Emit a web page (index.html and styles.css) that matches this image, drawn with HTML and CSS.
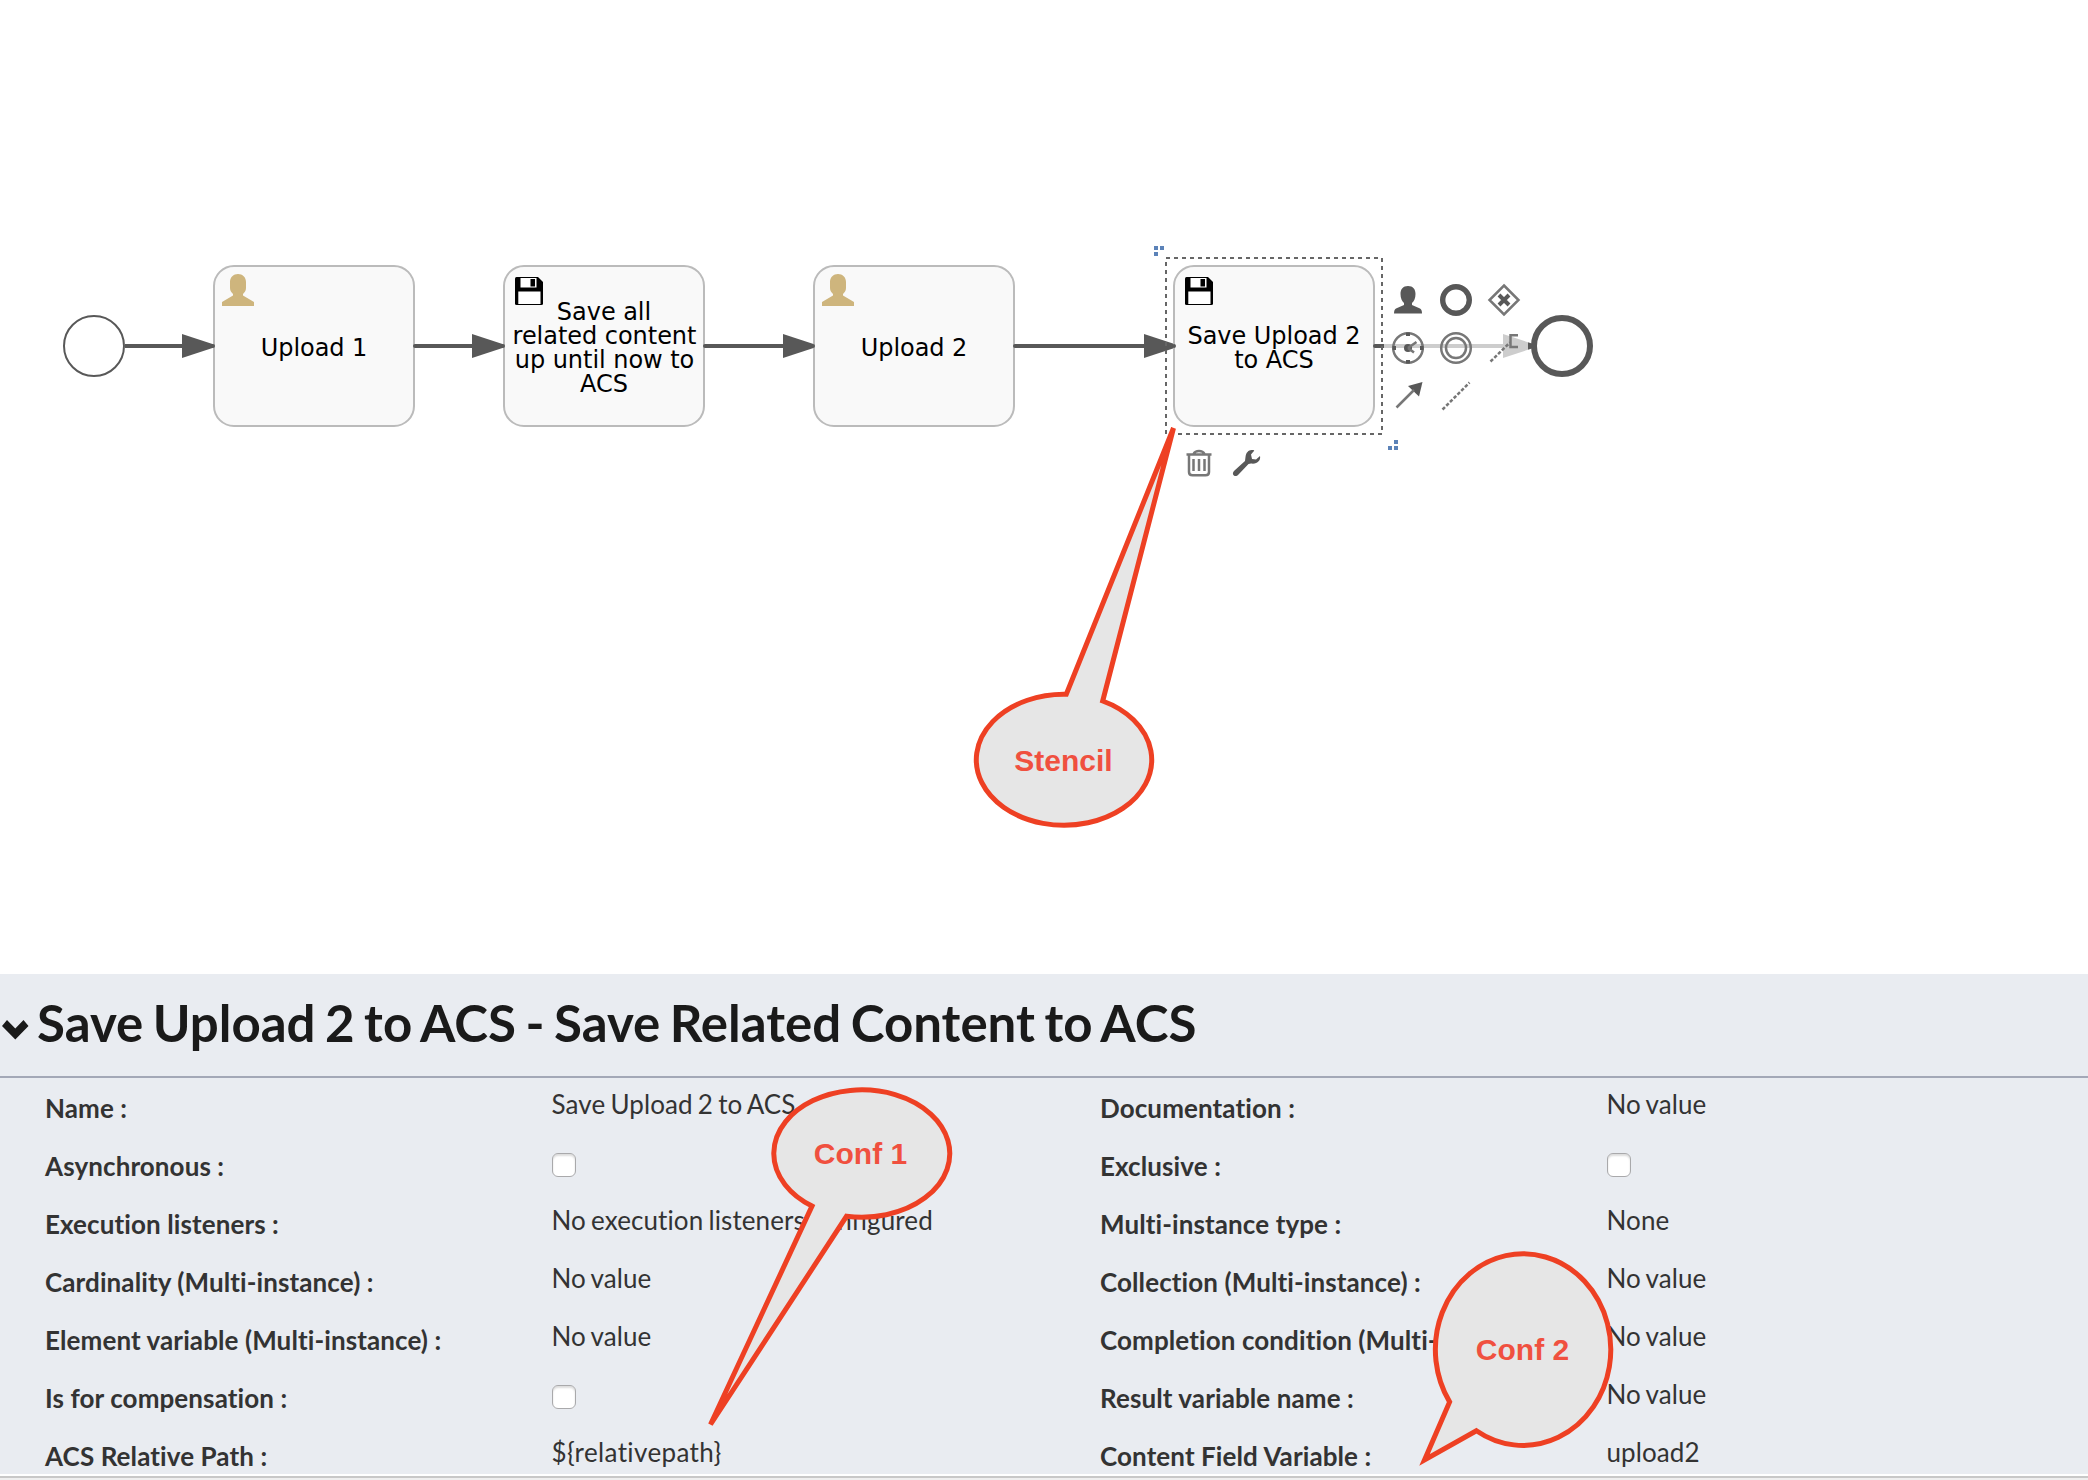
FILE: index.html
```html
<!DOCTYPE html>
<html lang="en">
<head>
<meta charset="utf-8">
<title>Process editor</title>
<link rel="stylesheet" href="styles.css">
</head>
<body>
<main class="editor">
  <section class="canvas">
    <svg class="diagram" viewBox="0 0 2088 974" width="2088" height="974">
      <defs>
        <symbol id="user" viewBox="0 0 32 32"><path d="M16 0C20.5 0 24 3 24 8V14C24 17 22.500 18.500 21 20V21.500L32 28V32H0V28L11 21.500V20C9.500 18.500 8 17 8 14V8C8 3 11.500 0 16 0Z"/></symbol>
        <symbol id="disk" viewBox="0 0 28 28">
          <path d="M1.500 0H23L28 5V26.500Q28 28 26.500 28H1.500Q0 28 0 26.500V1.500Q0 0 1.500 0Z"/>
          <path fill="#fff" d="M5.500 1H15.500V10.500H5.500ZM3.300 14.500H25.500V27H3.300ZM20 1H21.500V10.500H15.500V9.500H20ZM15.500 1H20V2H15.500Z"/>
        </symbol>
        <symbol id="head" viewBox="0 0 32 24"><path d="M0 0L32 10.500V13.500L0 24Z"/></symbol>
      </defs>
      <g class="flow">
        <path d="M125 346H190M415 346H480M705 346H790M1015 346H1150M1375 346H1510"/>
      </g>
      <g class="ink">
        <use href="#head" x="182" y="334" width="32" height="24"/>
        <use href="#head" x="472" y="334" width="32" height="24"/>
        <use href="#head" x="783" y="334" width="32" height="24"/>
        <use href="#head" x="1144" y="334" width="32" height="24"/>
        <use href="#head" x="1503" y="334" width="32" height="24"/>
      </g>
      <circle class="start" cx="94" cy="346" r="30"/>
      <circle class="end" cx="1562" cy="346" r="28"/>
      <rect class="task" x="214" y="266" width="200" height="160" rx="20"/>
      <rect class="task" x="504" y="266" width="200" height="160" rx="20"/>
      <rect class="task" x="814" y="266" width="200" height="160" rx="20"/>
      <rect class="task" x="1174" y="266" width="200" height="160" rx="20"/>
      <g class="ink"><circle cx="213" cy="346" r="2"/><circle cx="415" cy="346" r="2"/><circle cx="503" cy="346" r="2"/><circle cx="705" cy="346" r="2"/><circle cx="813" cy="346" r="2"/><circle cx="1015" cy="346" r="2"/><circle cx="1174" cy="346" r="2"/><circle cx="1375" cy="346" r="2"/></g>
      <g class="tan">
        <use href="#user" x="222" y="274" width="32" height="32"/>
        <use href="#user" x="822" y="274" width="32" height="32"/>
      </g>
      <use href="#disk" x="515" y="277" width="28" height="28"/>
      <use href="#disk" x="1185" y="277" width="28" height="28"/>
      <g class="task-text">
        <text x="314" y="356">Upload 1</text>
        <text x="604" y="320">Save all</text>
        <text x="604.500" y="344">related content</text>
        <text x="604.500" y="368">up until now to</text>
        <text x="604" y="392">ACS</text>
        <text x="914" y="356">Upload 2</text>
        <text x="1274" y="344">Save Upload 2</text>
        <text x="1274" y="368">to ACS</text>
      </g>
      <rect class="selection" x="1166" y="258" width="216" height="176"/>
      <path class="grip" d="M1154 246h4v4h-4zM1160 246h4v4h-4zM1154 252h4v4h-4zM1394 440h4v4h-4zM1388 446h4v4h-4zM1394 446h4v4h-4z"/>
      <rect class="veil" x="1384" y="276" width="144" height="144"/>

      <g class="ink">
        <path d="M1408 286C1413 286 1415.500 289 1415.500 294C1415.500 298.500 1414 301 1412 303V305L1420 308.500Q1422 309.500 1422 313.500H1394Q1394 309.500 1396 308.500L1404 305V303C1402 301 1400.500 298.500 1400.500 294C1400.500 289 1403 286 1408 286Z"/>
        <path d="M1422.500 382L1419 396.500L1408 386Z"/>
        <circle cx="1408" cy="348" r="4"/>
      </g>
      <g class="tool">
        <circle class="thick" cx="1456" cy="300" r="13.300"/>
        <path d="M1504 285.500L1518.500 300L1504 314.500L1489.500 300Z"/>
        <path class="cross" d="M1499 295L1509 305M1509 295L1499 305"/>
        <circle cx="1408" cy="348" r="14.800"/>
        <path class="tick" d="M1408 332.500V336M1408 360V363.500M1392.500 348H1396M1420 348H1423.500"/>
        <path d="M1408 348L1416.500 342M1408 348L1414 352.500"/>
        <circle cx="1456" cy="348" r="14.800"/><circle cx="1456" cy="348" r="10"/>
        <path class="dots" d="M1490.500 361.500L1510 342.500"/>
        <path d="M1518 335.300H1510.500V347H1518"/>
        <path d="M1396.500 407.500L1414 390"/>
        <path class="dots" d="M1442.500 409.500L1469.500 382.500"/>
        <path d="M1186.500 454.500H1211.500M1189 455V472Q1189 475.300 1192.500 475.300H1205.500Q1209 475.300 1209 472V455M1193.500 454Q1195 451 1199 451Q1203 451 1204.500 454M1193.500 459V471M1199 459V471M1204.500 459V471"/>
      </g>
      <path class="ink" d="M1251.500 450C1254 449.800 1255 450.500 1253.500 451.500L1251 454.500L1252 459L1256 459.500L1260 456C1261 460.500 1257 464.500 1251 463.500L1248.500 464L1238.500 474.500C1235 478.500 1230.500 474 1234.500 470.500L1245 461L1245.500 457C1246 452.500 1248.500 450.200 1251.500 450Z"/>
    </svg>
  </section>

  <section class="panel">
    <header class="panel-head">
      <svg class="chevron" viewBox="0 0 27 20" width="27" height="20"><path d="M0 6L5 0L13.300 8.500L21.500 0L26.500 6L13.300 19.500Z"/></svg>
      <h1 class="title">Save Upload 2 to ACS - Save Related Content to ACS</h1>
    </header>
    <div class="props">
      <dl class="column">
        <dt>Name :</dt><dd>Save Upload 2 to ACS</dd>
        <dt>Asynchronous :</dt><dd><span class="box"></span></dd>
        <dt>Execution listeners :</dt><dd>No execution listeners configured</dd>
        <dt>Cardinality (Multi-instance) :</dt><dd>No value</dd>
        <dt>Element variable (Multi-instance) :</dt><dd>No value</dd>
        <dt>Is for compensation :</dt><dd><span class="box"></span></dd>
        <dt>ACS Relative Path :</dt><dd class="path">${relativepath}</dd>
      </dl>
      <dl class="column">
        <dt>Documentation :</dt><dd>No value</dd>
        <dt>Exclusive :</dt><dd><span class="box"></span></dd>
        <dt>Multi-instance type :</dt><dd>None</dd>
        <dt>Collection (Multi-instance) :</dt><dd>No value</dd>
        <dt>Completion condition (Multi-</dt><dd>No value</dd>
        <dt>Result variable name :</dt><dd>No value</dd>
        <dt>Content Field Variable :</dt><dd>upload2</dd>
      </dl>
    </div>
  </section>
  <footer class="edge"></footer>

  <svg class="callouts" viewBox="0 0 2088 1480" width="2088" height="1480">
    <path d="M1066.300 694.300A87.700 65.500 0 1 0 1102.700 701L1173.500 428Z"/>
    <path d="M812 1206.100A88 63.700 0 1 1 846.500 1216.300L710.500 1424.500Z"/>
    <path d="M1449.600 1401.900A87.700 95.800 0 1 1 1476.400 1430.700L1424.500 1460Z"/>
    <text x="1063.500" y="771">Stencil</text>
    <text x="860.500" y="1163.500">Conf 1</text>
    <text x="1522.500" y="1359.500">Conf 2</text>
  </svg>
</main>
</body>
</html>
```
FILE: styles.css
```css
* { box-sizing: border-box; }
body { margin: 0; background: #fff; font-family: Lato, sans-serif; color: #333; }
.editor { position: relative; display: flex; flex-direction: column; width: 2088px; height: 1480px; overflow: hidden; }
.canvas { height: 974px; }
.diagram { display: block; }
.flow { stroke: #585858; stroke-width: 4; fill: none; }
.ink { fill: #585858; }
.tan { fill: #ceb57d; }
.start { fill: #fff; stroke: #585858; stroke-width: 2; }
.end { fill: #fff; stroke: #585858; stroke-width: 6; }
.task { fill: #f9f9f9; stroke: #bbb; stroke-width: 2; }
.task-text { font-family: Verdana, "DejaVu Sans", sans-serif; font-size: 24px; letter-spacing: -0.04px; text-anchor: middle; fill: #000; }
.selection { fill: none; stroke: #666; stroke-width: 2; stroke-dasharray: 4 4; }
.grip { fill: #5b82b8; }
.veil { fill: #fff; opacity: .7; }
.tool { fill: none; stroke: #777; stroke-width: 2.5; }
.tool .thick { stroke: #585858; stroke-width: 5.4; }
.tool .cross { stroke: #585858; stroke-width: 4; }
.tool .tick { stroke: #585858; stroke-width: 4; }
.tool .dots { stroke-dasharray: 3.5 1.8; }

.panel { height: 500px; background: #e9ecf1; }
.panel-head { display: flex; align-items: flex-start; gap: 8px; height: 104px; padding-left: 2px; border-bottom: 2px solid #a3a8b7; }
.chevron { flex: none; margin-top: 46px; fill: #1a1a1a; }
.title { margin: 0; font-size: 51px; line-height: 97px; font-weight: 700; word-spacing: -2.9px; color: #1a1a1a; white-space: nowrap; }
.props { display: grid; grid-template-columns: 1055px 1fr; padding-left: 45px; }
.column { display: grid; grid-template-columns: 506.5px 1fr; grid-auto-rows: 58px; margin: 0; font-size: 26px; white-space: nowrap; font-variant-ligatures: none; letter-spacing: .1px; }
.column dt { font-weight: 700; line-height: 60px; }
.column dd { margin: 0; line-height: 52px; word-spacing: -1.6px; }
.column .path { letter-spacing: .38px; }
.box { display: block; width: 24px; height: 24px; margin-top: 17px; border: 1px solid #a9a9ab; border-radius: 6px; background: #fff; box-shadow: inset 0 2px 2px #ddd; }
.edge { height: 6px; background: #efefef; border-top: 2px solid #fff; }
.edge::before { content: ""; display: block; height: 2px; background: #c8c8c8; }

.callouts { position: absolute; inset: 0; }
.callouts path { fill: #e6e6e6; stroke: #ee4023; stroke-width: 5; stroke-miterlimit: 6; }
.callouts text { font: 700 30px "Liberation Sans", Arial, sans-serif; text-anchor: middle; fill: #f0503f; }
```
